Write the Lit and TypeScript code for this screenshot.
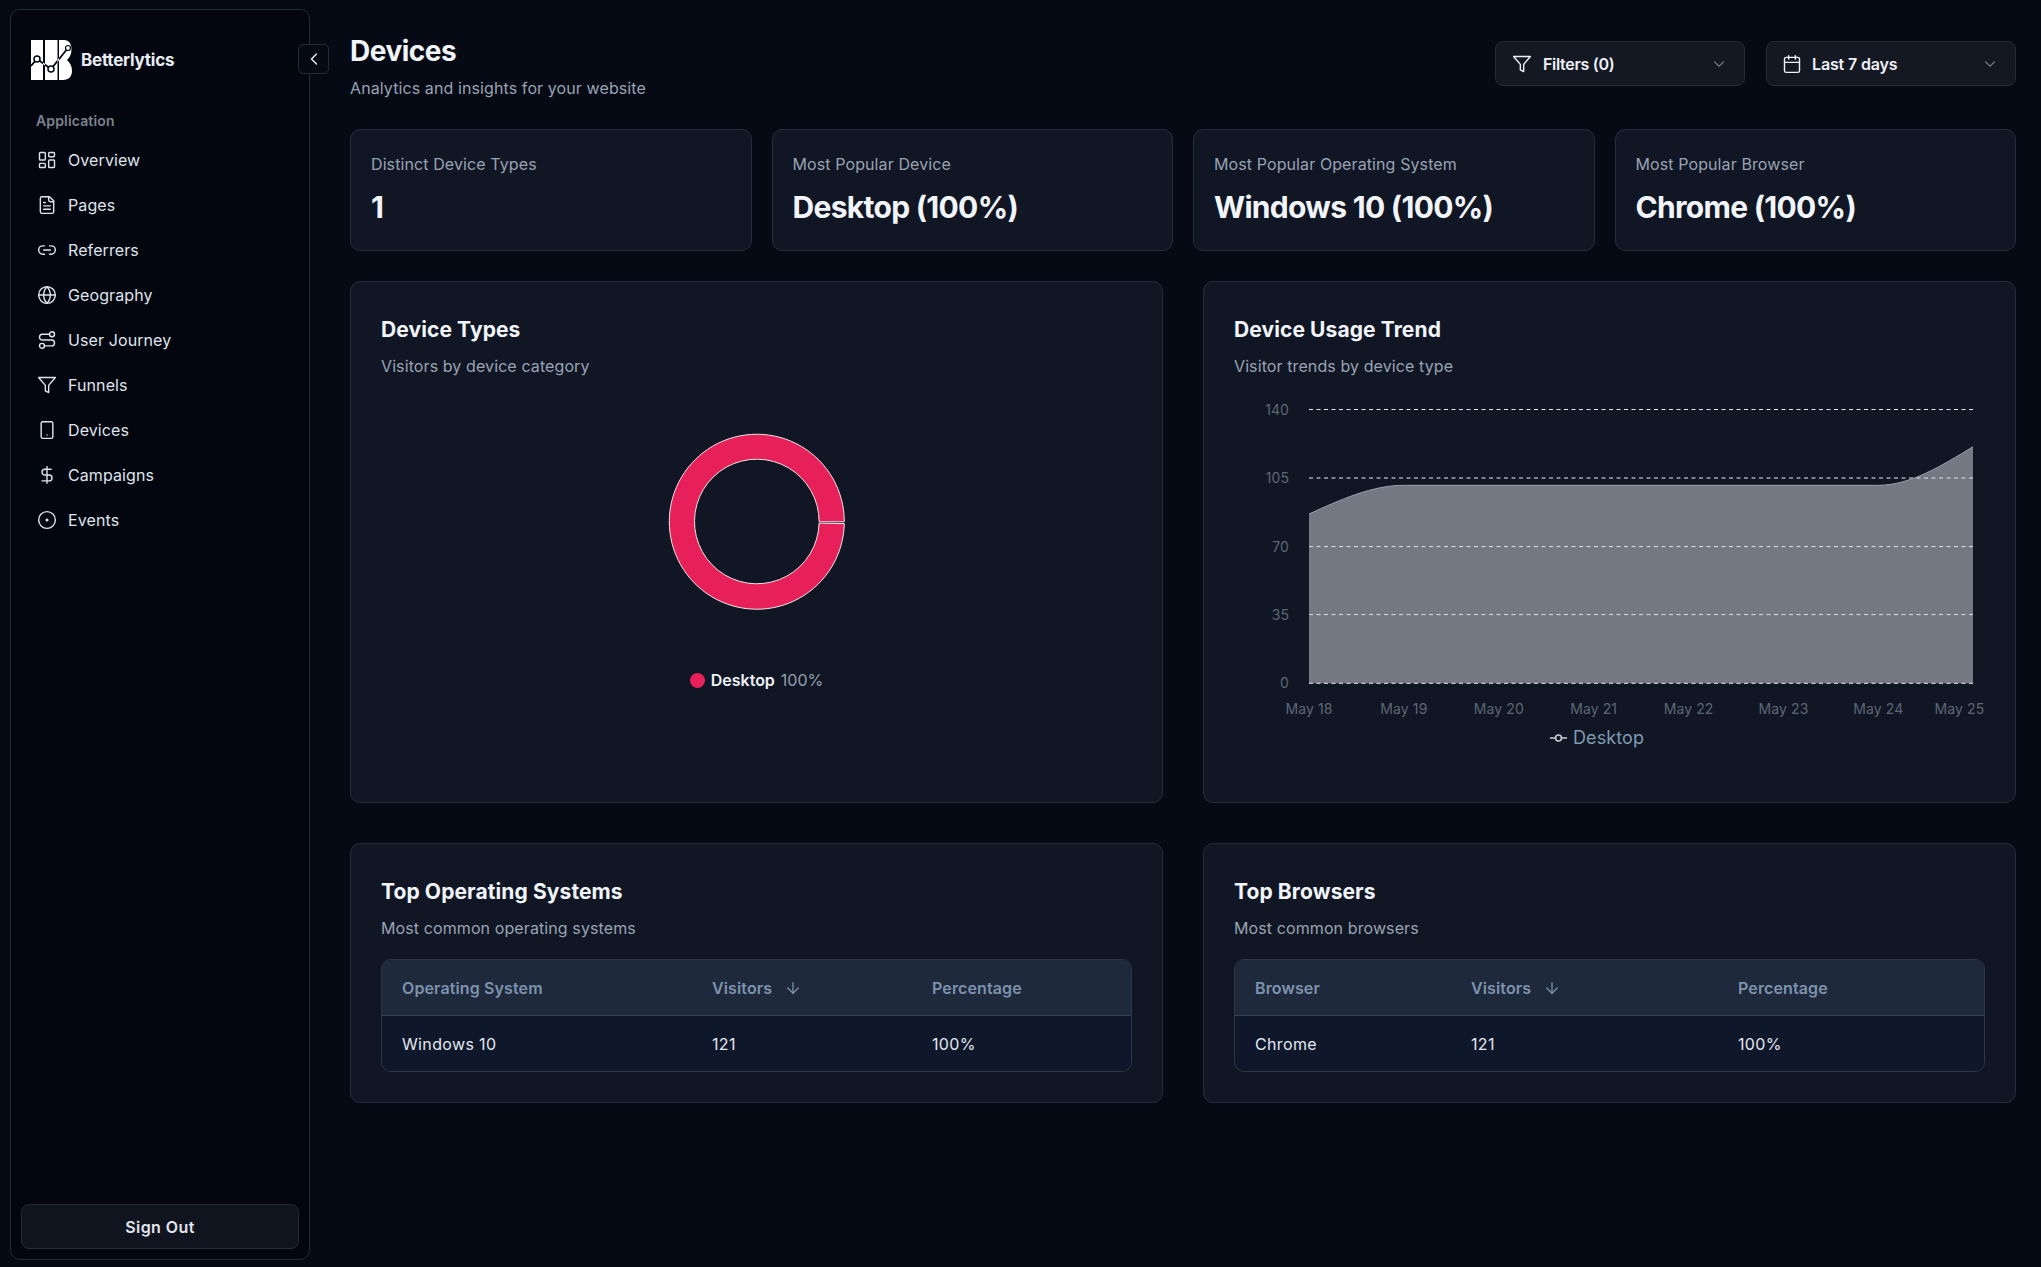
import { LitElement, html, css, svg } from 'lit';
import { customElement } from 'lit/decorators.js';

const icons: Record<string, unknown> = {
  overview: svg`<rect x="3" y="3" width="7" height="9" rx="1"/><rect x="14" y="3" width="7" height="5" rx="1"/><rect x="14" y="12" width="7" height="9" rx="1"/><rect x="3" y="16" width="7" height="5" rx="1"/>`,
  pages: svg`<path d="M15 2H6a2 2 0 0 0-2 2v16a2 2 0 0 0 2 2h12a2 2 0 0 0 2-2V7Z"/><path d="M14 2v4a2 2 0 0 0 2 2h4"/><path d="M10 9H8"/><path d="M16 13H8"/><path d="M16 17H8"/>`,
  referrers: svg`<path d="M9 17H7A5 5 0 0 1 7 7h2"/><path d="M15 7h2a5 5 0 1 1 0 10h-2"/><line x1="8" x2="16" y1="12" y2="12"/>`,
  geography: svg`<circle cx="12" cy="12" r="10"/><path d="M12 2a14.5 14.5 0 0 0 0 20 14.5 14.5 0 0 0 0-20"/><path d="M2 12h20"/>`,
  journey: svg`<circle cx="6" cy="19" r="3"/><path d="M9 19h8.5a3.5 3.5 0 0 0 0-7h-11a3.5 3.5 0 0 1 0-7H15"/><circle cx="18" cy="5" r="3"/>`,
  funnel: svg`<polygon points="22 3 2 3 10 12.46 10 19 14 21 14 12.46 22 3"/>`,
  device: svg`<rect x="5" y="2" width="14" height="20" rx="2"/><path d="M12 18h.01"/>`,
  dollar: svg`<line x1="12" x2="12" y1="2" y2="22"/><path d="M17 5H9.5a3.5 3.5 0 0 0 0 7h5a3.5 3.5 0 0 1 0 7H6"/>`,
  events: svg`<circle cx="12" cy="12" r="10"/><circle cx="12" cy="12" r="1"/>`,
  calendar: svg`<path d="M8 2v4"/><path d="M16 2v4"/><rect x="3" y="4" width="18" height="18" rx="2"/><path d="M3 10h18"/>`,
  chevronDown: svg`<path d="m6 9 6 6 6-6"/>`,
  chevronLeft: svg`<path d="m15 18-6-6 6-6"/>`,
  arrowDown: svg`<path d="M12 5v14"/><path d="m19 12-7 7-7-7"/>`,
};

const icon = (name: string, cls = 'ic') => html`
  <svg class=${cls} viewBox="0 0 24 24" fill="none" stroke="currentColor" stroke-width="2" stroke-linecap="round" stroke-linejoin="round">${icons[name]}</svg>
`;

const NAV = [
  ['overview', 'Overview'],
  ['pages', 'Pages'],
  ['referrers', 'Referrers'],
  ['geography', 'Geography'],
  ['journey', 'User Journey'],
  ['funnel', 'Funnels'],
  ['device', 'Devices'],
  ['dollar', 'Campaigns'],
  ['events', 'Events'],
];

const STATS = [
  ['Distinct Device Types', '1'],
  ['Most Popular Device', 'Desktop (100%)'],
  ['Most Popular Operating System', 'Windows 10 (100%)'],
  ['Most Popular Browser', 'Chrome (100%)'],
];

// chart coords are local to the svg, which starts at page (1234, 378)
const GRID = [
  { y: 31.5, label: '140' },
  { y: 100, label: '105' },
  { y: 168.6, label: '70' },
  { y: 236.6, label: '35' },
  { y: 305.3, label: '0' },
];
const TICKS = [
  { x: 75, label: 'May 18' },
  { x: 169.9, label: 'May 19' },
  { x: 264.8, label: 'May 20' },
  { x: 359.7, label: 'May 21' },
  { x: 454.6, label: 'May 22' },
  { x: 549.5, label: 'May 23' },
  { x: 644.4, label: 'May 24' },
  { x: 725.5, label: 'May 25' },
];
const TOP = 'M75 136 C106.6 121.6 138.3 107.3 169.9 107.3 L644.4 107.3 C676 107.3 707.4 88 739 68.7';

@customElement('app-root')
export class AppRoot extends LitElement {
  static styles = css`
    :host {
      display: flex;
      min-height: 1267px;
      background: #060a14;
      color: #f1f5f9;
      font-family: Inter, 'Noto Sans', sans-serif;
      font-size: 16px;
      line-height: 24px;
    }

    .ic {
      width: 20px;
      height: 20px;
      flex: none;
      stroke-width: 1.7;
    }

    /* sidebar */
    .sidebar {
      position: relative;
      box-sizing: border-box;
      width: 300px;
      height: 1251px;
      margin: 9px 0 0 10px;
      padding: 30px 10px 10px;
      display: flex;
      flex-direction: column;
      flex: none;
      background: #03060e;
      border: 1px solid #262b38;
      border-radius: 10px;
    }
    .brand {
      display: flex;
      align-items: center;
      gap: 9px;
      height: 40px;
      padding-left: 10px;
      font-weight: 700;
      font-size: 17px;
      letter-spacing: -0.23px;
      color: #e8ecf4;
    }
    .brand svg {
      width: 41px;
      height: 40px;
    }
    .collapse {
      position: absolute;
      left: 287px;
      top: 34px;
      width: 31px;
      height: 30px;
      box-sizing: border-box;
      display: flex;
      align-items: center;
      justify-content: center;
      background: #060a14;
      border: 1px solid #262b38;
      border-radius: 5px;
      color: #e8ecf4;
    }
    .group-label {
      margin: 31px 0 6px 15px;
      font-size: 14px;
      line-height: 20px;
      font-weight: 600;
      letter-spacing: 0.15px;
      color: #7c828f;
    }
    nav {
      display: flex;
      flex-direction: column;
    }
    .nav-item {
      display: flex;
      align-items: center;
      gap: 11px;
      height: 45px;
      padding-left: 16px;
      color: #dfe4ec;
      letter-spacing: 0.1px;
    }
    .signout {
      margin-top: auto;
      height: 45px;
      box-sizing: border-box;
      display: flex;
      align-items: center;
      justify-content: center;
      background: #10141e;
      border: 1px solid #262b38;
      border-radius: 8px;
      font-weight: 600;
      letter-spacing: 0.4px;
      color: #e2e6ee;
    }

    /* main */
    main {
      flex: none;
      width: 1666px;
      margin-left: 40px;
      padding-top: 33px;
    }
    .page-head {
      display: flex;
      justify-content: space-between;
      align-items: flex-start;
      margin-bottom: 29px;
    }
    h1 {
      margin: 0 0 7px;
      font-size: 28px;
      line-height: 36px;
      font-weight: 700;
      letter-spacing: -0.5px;
    }
    .muted {
      color: #99a3b3;
      letter-spacing: 0.1px;
    }
    .pickers {
      display: flex;
      gap: 21px;
      margin-top: 8px;
    }
    .picker {
      box-sizing: border-box;
      width: 250px;
      height: 45px;
      padding: 0 16px;
      display: flex;
      align-items: center;
      gap: 11px;
      background: #131823;
      border: 1px solid #262b38;
      border-radius: 8px;
      font-weight: 600;
      letter-spacing: -0.3px;
      color: #eef1f6;
    }
    .picker.date {
      padding-left: 15px;
      gap: 10px;
      letter-spacing: -0.15px;
    }
    .picker .chev {
      width: 18px;
      height: 18px;
      margin-left: auto;
      stroke-width: 1.5;
      color: #6f7683;
    }
    .stats {
      display: grid;
      grid-template-columns: repeat(4, minmax(0, 1fr));
      gap: 20px;
      margin-bottom: 30px;
    }
    .card {
      box-sizing: border-box;
      background: #101624;
      border: 1px solid #262c3a;
      border-radius: 10px;
    }
    .stat {
      padding: 22px 20px 24px;
      height: 122px;
    }
    .stat .value {
      margin-top: 13px;
      font-size: 30px;
      line-height: 36px;
      font-weight: 700;
      letter-spacing: -0.7px;
    }
    .row {
      display: grid;
      grid-template-columns: repeat(2, minmax(0, 1fr));
      gap: 40px;
    }
    .row.charts {
      margin-bottom: 40px;
    }
    .panel {
      padding: 34px 30px 30px;
    }
    .panel.tall {
      height: 522px;
    }
    h2 {
      margin: 0 0 10px;
      font-size: 21px;
      line-height: 28px;
      font-weight: 700;
      letter-spacing: 0.1px;
    }
    .donut {
      display: flex;
      flex-direction: column;
      align-items: center;
    }
    .donut svg {
      display: block;
    }
    .donut-legend {
      margin-top: 10px;
      display: flex;
      align-items: center;
      gap: 6px;
      color: #94a0b0;
      letter-spacing: 0;
    }
    .donut-legend b {
      font-weight: 600;
      color: #eef1f6;
    }
    .dot {
      width: 15px;
      height: 15px;
      border-radius: 50%;
      background: #e8205a;
    }
    .area-chart {
      display: block;
      overflow: visible;
    }
    .tick {
      font-size: 14px;
      letter-spacing: 0.1px;
      fill: #5d6675;
    }
    .chart-legend {
      display: flex;
      justify-content: center;
      align-items: center;
      gap: 6px;
      margin-top: 8px;
      padding-right: 25px;
      font-size: 18px;
      letter-spacing: 0.1px;
      color: #7f9bb0;
    }
    .chart-legend svg {
      width: 17px;
      height: 10px;
    }

    /* tables */
    table {
      width: 100%;
      margin-top: 19px;
      table-layout: fixed;
      border-collapse: separate;
      border-spacing: 0;
      border: 1px solid #2d3748;
      border-radius: 10px;
      overflow: hidden;
    }
    th, td {
      height: 55px;
      padding: 0 20px;
      text-align: left;
    }
    th {
      background: #1e293b;
      border-bottom: 1px solid #334155;
      font-weight: 600;
      letter-spacing: 0.12px;
      color: #7d93ad;
    }
    th .arrow {
      width: 18px;
      height: 18px;
      margin-left: 8px;
      vertical-align: -3px;
      stroke-width: 1.7;
    }
    td {
      background: #0f172a;
      color: #e2e8f0;
      letter-spacing: 0.35px;
    }
    .os .c1 { width: 310px; }
    .os .c2 { width: 220px; }
    .browser .c1 { width: 216px; }
    .browser .c2 { width: 267px; }
  `;

  private renderSidebar() {
    return html`
      <aside class="sidebar">
        <div class="brand">
          <svg viewBox="0 0 41 40">
            <defs>
              <clipPath id="bars">
                <rect x="0" y="0" width="12" height="40" />
                <rect x="14" y="0" width="12.5" height="40" />
                <path d="M28 0H33C38 0 40.500 4 40.500 9C40.500 14 39 17 36 20C39 23 41 26 41 31C41 36 38 40 32 40H28Z" />
              </clipPath>
            </defs>
            <path d="M0 26 6 19 20 29 37 8" fill="none" stroke="#fff" stroke-width="1.500" />
            <rect x="0" y="0" width="41" height="40" fill="#fff" clip-path="url(#bars)" />
            <g clip-path="url(#bars)" fill="none" stroke="#03060e" stroke-width="1.800">
              <path d="M0 26 6 19 20 29 37 8" />
            </g>
            <circle cx="6" cy="19" r="3" fill="#fff" stroke="#03060e" stroke-width="1.500" />
            <circle cx="20" cy="29" r="3" fill="#fff" stroke="#03060e" stroke-width="1.500" />
            <circle cx="37" cy="8" r="2.500" fill="#fff" stroke="#03060e" stroke-width="1.200" />
          </svg>
          Betterlytics
        </div>
        <div class="collapse">${icon('chevronLeft', 'ic')}</div>
        <div class="group-label">Application</div>
        <nav>
          ${NAV.map(([name, label]) => html`<div class="nav-item">${icon(name)}<span>${label}</span></div>`)}
        </nav>
        <div class="signout">Sign Out</div>
      </aside>
    `;
  }

  private renderDonut() {
    return html`
      <div class="donut">
        <svg width="200" height="280" viewBox="0 0 200 280">
          <path
            d="M187.300 143.800A87.500 87.500 0 1 0 187.280 145.600L162.080 145.100A62.300 62.300 0 1 1 162.100 143.800Z"
            fill="#e8205a"
            stroke="#e8e8ea"
            stroke-width="1"
          />
        </svg>
        <div class="donut-legend"><span class="dot"></span><b>Desktop</b><span>100%</span></div>
      </div>
    `;
  }

  private renderArea() {
    return html`
      <svg class="area-chart" width="750" height="340" viewBox="0 0 750 340">
        ${GRID.map(
          (g) => svg`
            <line x1="75" x2="739" y1=${g.y} y2=${g.y} stroke="#e8eaee" stroke-dasharray="4 3.5" />
            <text class="tick" x="55" y=${g.y + 5} text-anchor="end">${g.label}</text>
          `
        )}
        <path d="${TOP} L739 305.300 L75 305.300Z" fill="#d6dae2" fill-opacity="0.5" />
        <path d=${TOP} fill="none" stroke="#9aa1ad" stroke-width="1" />
        ${TICKS.map((t) => svg`<text class="tick" x=${t.x} y="336" text-anchor="middle">${t.label}</text>`)}
      </svg>
      <div class="chart-legend">
        <svg viewBox="0 0 17 10" fill="none" stroke="#c9ced6" stroke-width="1.600">
          <path d="M0 5h5M12 5h5" /><circle cx="8.500" cy="5" r="3" />
        </svg>
        Desktop
      </div>
    `;
  }

  private renderTable(cls: string, first: string, name: string) {
    return html`
      <table class=${cls}>
        <colgroup><col class="c1" /><col class="c2" /><col class="c3" /></colgroup>
        <thead>
          <tr>
            <th>${first}</th>
            <th>Visitors${icon('arrowDown', 'arrow')}</th>
            <th>Percentage</th>
          </tr>
        </thead>
        <tbody>
          <tr><td>${name}</td><td>121</td><td>100%</td></tr>
        </tbody>
      </table>
    `;
  }

  render() {
    return html`
      ${this.renderSidebar()}
      <main>
        <header class="page-head">
          <div>
            <h1>Devices</h1>
            <div class="muted">Analytics and insights for your website</div>
          </div>
          <div class="pickers">
            <div class="picker">${icon('funnel')}<span>Filters (0)</span>${icon('chevronDown', 'ic chev')}</div>
            <div class="picker date">${icon('calendar')}<span>Last 7 days</span>${icon('chevronDown', 'ic chev')}</div>
          </div>
        </header>

        <section class="stats">
          ${STATS.map(
            ([label, value]) => html`
              <div class="card stat">
                <div class="muted">${label}</div>
                <div class="value">${value}</div>
              </div>
            `
          )}
        </section>

        <section class="row charts">
          <div class="card panel tall">
            <h2>Device Types</h2>
            <div class="muted">Visitors by device category</div>
            ${this.renderDonut()}
          </div>
          <div class="card panel tall">
            <h2>Device Usage Trend</h2>
            <div class="muted">Visitor trends by device type</div>
            ${this.renderArea()}
          </div>
        </section>

        <section class="row">
          <div class="card panel">
            <h2>Top Operating Systems</h2>
            <div class="muted">Most common operating systems</div>
            ${this.renderTable('os', 'Operating System', 'Windows 10')}
          </div>
          <div class="card panel">
            <h2>Top Browsers</h2>
            <div class="muted">Most common browsers</div>
            ${this.renderTable('browser', 'Browser', 'Chrome')}
          </div>
        </section>
      </main>
    `;
  }
}
